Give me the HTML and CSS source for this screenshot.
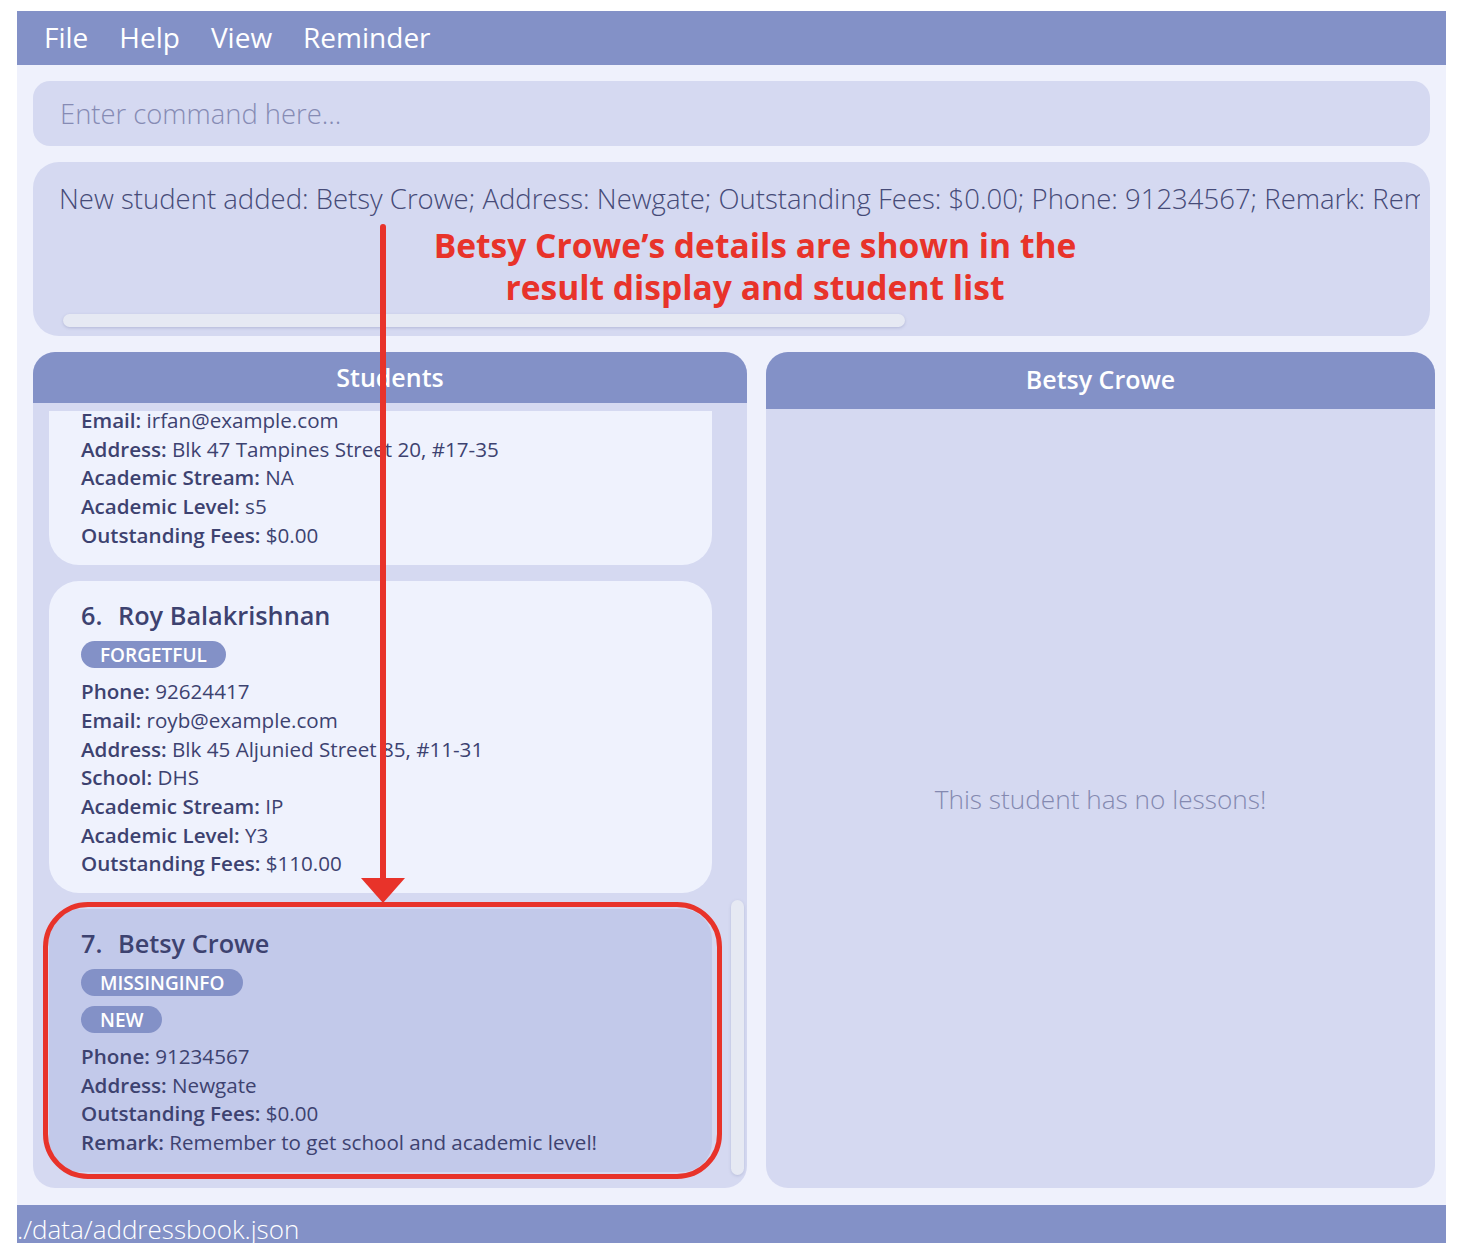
FILE: index.html
```html
<!DOCTYPE html>
<html lang="en">
<head>
<meta charset="utf-8">
<title>TutorConnect</title>
<link rel="stylesheet" href="styles.css">
</head>
<body>
<div class="app">
  <div class="menubar">
    <span class="menu-item">File</span>
    <span class="menu-item">Help</span>
    <span class="menu-item">View</span>
    <span class="menu-item">Reminder</span>
  </div>
  <div class="main">
    <div class="command">Enter command here...</div>
    <div class="result">
      <div class="result-text">New student added: Betsy Crowe; Address: Newgate; Outstanding Fees: $0.00; Phone: 91234567; Remark: Remember to get school and academic level!; Tags: [MISSINGINFO][NEW]</div>
      <div class="hscroll"><div class="hthumb"></div></div>
    </div>
    <div class="panels">
      <div class="panel panel-left">
        <div class="panel-head">Students</div>
        <div class="panel-body list-body">
          <div class="list-viewport">
            <div class="card card-partial">
              <div class="field"><b>Email:</b> irfan@example.com</div>
              <div class="field"><b>Address:</b> Blk 47 Tampines Street 20, #17-35</div>
              <div class="field"><b>Academic Stream:</b> NA</div>
              <div class="field"><b>Academic Level:</b> s5</div>
              <div class="field"><b>Outstanding Fees:</b> $0.00</div>
            </div>
            <div class="card">
              <div class="name"><span class="idx">6.</span>Roy Balakrishnan</div>
              <div class="tags"><span class="tag">FORGETFUL</span></div>
              <div class="field"><b>Phone:</b> 92624417</div>
              <div class="field"><b>Email:</b> royb@example.com</div>
              <div class="field"><b>Address:</b> Blk 45 Aljunied Street 85, #11-31</div>
              <div class="field"><b>School:</b> DHS</div>
              <div class="field"><b>Academic Stream:</b> IP</div>
              <div class="field"><b>Academic Level:</b> Y3</div>
              <div class="field"><b>Outstanding Fees:</b> $110.00</div>
            </div>
            <div class="card card-selected">
              <div class="name"><span class="idx">7.</span>Betsy Crowe</div>
              <div class="tags"><span class="tag">MISSINGINFO</span><span class="tag">NEW</span></div>
              <div class="field"><b>Phone:</b> 91234567</div>
              <div class="field"><b>Address:</b> Newgate</div>
              <div class="field"><b>Outstanding Fees:</b> $0.00</div>
              <div class="field"><b>Remark:</b> Remember to get school and academic level!</div>
            </div>
          </div>
          <div class="vscroll"><div class="vthumb"></div></div>
        </div>
      </div>
      <div class="panel panel-right">
        <div class="panel-head panel-head-tall">Betsy Crowe</div>
        <div class="panel-body detail-body">
          <div class="empty">This student has no lessons!</div>
        </div>
      </div>
    </div>
  </div>
  <div class="statusbar">./data/addressbook.json</div>

  <div class="annot-text">Betsy Crowe’s details are shown in the<br>result display and student list</div>
  <div class="annot-line"></div>
  <div class="annot-head"></div>
  <div class="annot-box"></div>
</div>
</body>
</html>
```
FILE: styles.css
```css
* { box-sizing: border-box; }
html, body { margin: 0; padding: 0; background: #ffffff; }
body { font-family: "Open Sans", "Noto Sans", sans-serif; color: #3d4270; }

.app {
  position: relative;
  margin: 11px 0 0 17px;
  width: 1429px;
  height: 1232px;
  background: #eff1fc;
  display: flex;
  flex-direction: column;
  overflow: hidden;
}

.menubar {
  height: 54px;
  flex: none;
  background: #8391c7;
  display: flex;
  align-items: center;
  gap: 31px;
  padding: 0 0 2px 27px;
}
.menu-item {
  color: #ffffff;
  font-size: 28px;
  font-weight: 400;
  line-height: 1;
}

.main {
  flex: 1;
  display: flex;
  flex-direction: column;
  gap: 16px;
  padding: 16px 11px 0 16px;
}

.command {
  height: 65px;
  flex: none;
  width: 1397px;
  background: #d5d9f1;
  border-radius: 17px;
  padding: 0 0 0 27px;
  display: flex;
  align-items: center;
  font-size: 27.4px;
  font-weight: 300;
  color: #868bb4;
}

.result {
  height: 174px;
  flex: none;
  width: 1397px;
  background: #d5d9f1;
  border-radius: 26px;
  padding: 18px 10px 9px 26px;
  display: flex;
  flex-direction: column;
  justify-content: space-between;
  overflow: hidden;
}
.result-text {
  font-size: 27.5px;
  font-weight: 300;
  color: #464b78;
  white-space: nowrap;
  overflow: hidden;
  line-height: 38px;
}
.hscroll {
  height: 13px;
  padding-left: 4px;
}
.hthumb {
  width: 842px;
  height: 13px;
  border-radius: 7px;
  background: #e6e9f3;
  box-shadow: 0 1px 3px rgba(120, 126, 170, 0.35);
}

.panels {
  height: 836px;
  flex: none;
  display: flex;
  gap: 19px;
}
.panel {
  display: flex;
  flex-direction: column;
  border-radius: 22px;
  overflow: hidden;
  background: #d5d9f1;
}
.panel-left { width: 714px; }
.panel-right { width: 669px; }

.panel-head {
  height: 51px;
  flex: none;
  background: #8391c7;
  color: #ffffff;
  font-size: 25px;
  font-weight: 600;
  display: flex;
  align-items: center;
  justify-content: center;
  padding-bottom: 1px;
}
.panel-head-tall { height: 57px; padding-bottom: 4px; }

.panel-body { flex: 1; min-height: 0; }

.list-body {
  display: flex;
  padding: 8px 3px 8px 16px;
  gap: 19px;
}
.list-viewport {
  width: 663px;
  overflow: hidden;
  display: flex;
  flex-direction: column;
  gap: 16px;
}
.card {
  flex: none;
  background: #eff2fd;
  border-radius: 30px;
  padding: 17px 20px 15px 32px;
}
.card-partial {
  margin-top: -5px;
  padding-top: 0;
  padding-bottom: 16px;
  border-radius: 0 0 30px 30px;
}
.card-selected {
  background: #c2c9ea;
}
.name {
  font-size: 25.3px;
  font-weight: 600;
  line-height: 34px;
  color: #3d4270;
}
.idx { display: inline-block; width: 37px; }
.tags {
  display: flex;
  flex-direction: column;
  align-items: flex-start;
  gap: 10px;
  margin: 9px 0 9px;
}
.tag {
  height: 27px;
  padding: 0 19px;
  border-radius: 14px;
  background: #8391c7;
  color: #ffffff;
  font-size: 19px;
  font-weight: 600;
  display: flex;
  align-items: center;
}
.field {
  font-size: 20.6px;
  line-height: 28.67px;
  color: #3d4270;
  white-space: nowrap;
}
.field b { font-weight: 600; }

.vscroll {
  width: 13px;
  display: flex;
  flex-direction: column;
  justify-content: flex-end;
  padding-bottom: 5px;
}
.vthumb {
  height: 275px;
  border-radius: 7px;
  background: #e6e9f3;
  box-shadow: 0 1px 3px rgba(120, 126, 170, 0.3);
}

.detail-body {
  display: flex;
  align-items: center;
  justify-content: center;
}
.empty {
  font-size: 26.2px;
  font-weight: 300;
  color: #8489b0;
  margin-top: 1px;
}

.statusbar {
  height: 38px;
  flex: none;
  margin-top: 17px;
  background: #8391c7;
  color: #ffffff;
  font-size: 26px;
  font-weight: 300;
  line-height: 36px;
  padding: 6px 0 0 0;
  white-space: nowrap;
}

/* annotations overlaying the screenshot */
.annot-text {
  position: absolute;
  left: 338px;
  top: 213px;
  width: 800px;
  text-align: center;
  color: #e8332a;
  font-size: 33.6px;
  font-weight: 700;
  line-height: 42px;
}
.annot-line {
  position: absolute;
  left: 363px;
  top: 213px;
  width: 6px;
  height: 660px;
  background: #e8332a;
  border-radius: 3px;
}
.annot-head {
  position: absolute;
  left: 344px;
  top: 867px;
  width: 0;
  height: 0;
  border-left: 22px solid transparent;
  border-right: 22px solid transparent;
  border-top: 25px solid #e8332a;
}
.annot-box {
  position: absolute;
  left: 26px;
  top: 891px;
  width: 679px;
  height: 277px;
  border: 5px solid #e8332a;
  border-radius: 45px;
}
```
